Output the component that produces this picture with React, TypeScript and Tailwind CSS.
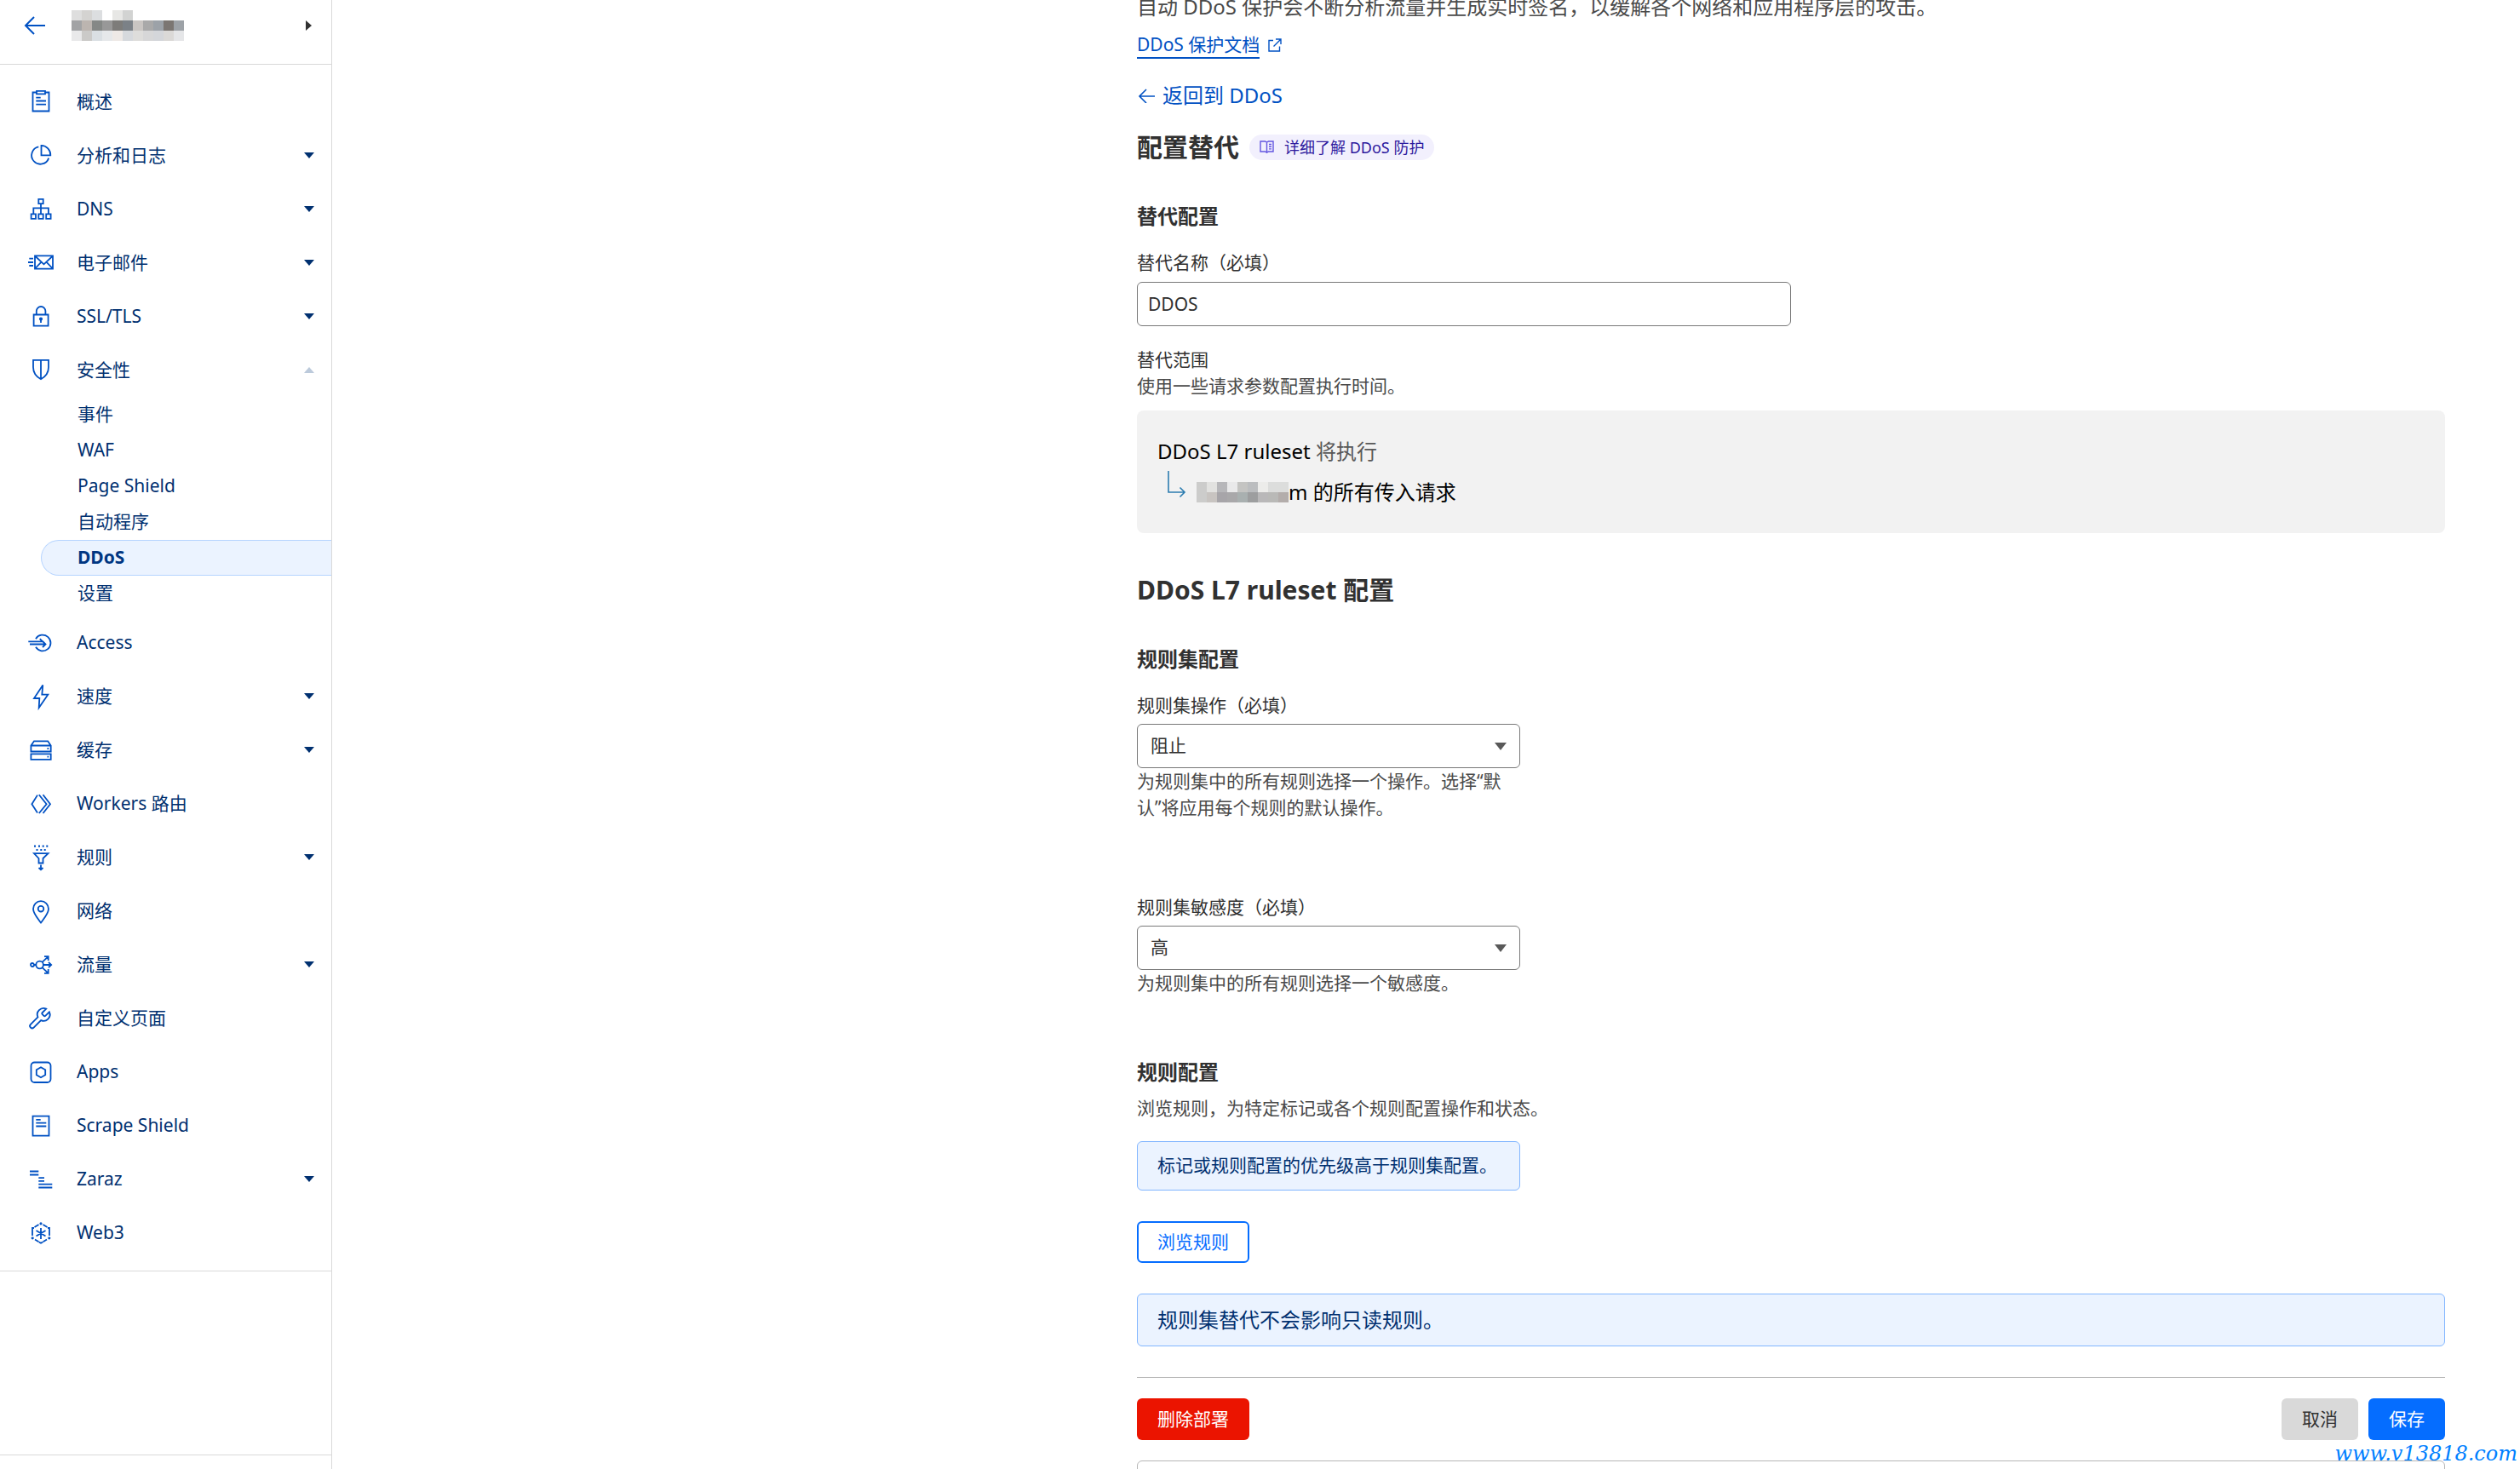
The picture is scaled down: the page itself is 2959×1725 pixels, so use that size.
import type { ReactNode } from "react";

interface NavItem {
  label: string;
  icon: ReactNode;
  expandable?: boolean;
  children?: string[];
}

const Icon = ({ children }: { children: ReactNode }) => (
  <svg
    width="31"
    height="31"
    viewBox="0 0 31 31"
    fill="none"
    stroke="#0051c3"
    strokeWidth="1.8"
    className="shrink-0 overflow-visible"
    aria-hidden="true"
  >
    {children}
  </svg>
);

const navItems: NavItem[] = [
  {
    label: "概述",
    icon: (
      <Icon>
        <path d="M10 4.5H5.5v22h19v-22H20M10 2.8h10v3.6H10zM9.3 10.7h5.4M9.3 14.5H21M9.3 18.6H21" />
      </Icon>
    ),
  },
  {
    label: "分析和日志",
    expandable: true,
    icon: (
      <Icon>
        <path d="M15.5 3.8v11.5h10.8A11 11 0 0 0 15.5 3.8zM12.3 5.3A10.3 10.3 0 1 0 24.2 18.6" />
      </Icon>
    ),
  },
  {
    label: "DNS",
    expandable: true,
    icon: (
      <Icon>
        <path d="M12.3 3.8h5.4v5.4h-5.4zM3.6 21.4H9v5.4H3.6zM12.3 21.4h5.4v5.4h-5.4zM21.2 21.4h5.4v5.4h-5.4zM15 9.2v12.2M6.3 21.4v-7h17.6v7" />
      </Icon>
    ),
  },
  {
    label: "电子邮件",
    expandable: true,
    icon: (
      <Icon>
        <path d="M8 7.3h21v15.4H8zM8 7.5l10.5 9.8L29 7.5M8 22.5l7.3-7.6M29 22.5l-7.3-7.6M1.3 10.7H6M0 15h6M1.3 19H6" />
      </Icon>
    ),
  },
  {
    label: "SSL/TLS",
    expandable: true,
    icon: (
      <Icon>
        <path d="M6.6 13.5h17v13.2h-17zM9.8 13.5V9.3a5.3 5.3 0 0 1 10.6 0v4.2M15 18v5" />
        <circle cx="15" cy="18.6" r="1.2" fill="#0051c3" />
      </Icon>
    ),
  },
  {
    label: "安全性",
    expandable: true,
    icon: (
      <Icon>
        <path d="M6 3.8h18v8.4c0 6.6-3.4 11-9 14-5.6-3-9-7.4-9-14zM15 3.8v22" />
      </Icon>
    ),
    children: ["事件", "WAF", "Page Shield", "自动程序", "DDoS", "设置"],
  },
  {
    label: "Access",
    icon: (
      <Icon>
        <path d="M9 11.2A9.4 9.4 0 1 1 9 20.8M.3 14.4H17l-3.2-3.2M2 17.5h18.5M17 21l3.5-3.5L17 14" />
      </Icon>
    ),
  },
  {
    label: "速度",
    expandable: true,
    icon: (
      <Icon>
        <path d="M17.3 2.5 7 18h6.3l-.6 11L23.3 13.7h-7z" />
      </Icon>
    ),
  },
  {
    label: "缓存",
    expandable: true,
    icon: (
      <Icon>
        <path d="M3.4 10.5 7 5.3h16.2l3.5 5.2v7H3.4zM3.4 10.5h23.3M3.4 20.3h23.3v6.5H3.4zM22.5 14h1.7M22.5 23.6h1.7" />
      </Icon>
    ),
  },
  {
    label: "Workers 路由",
    icon: (
      <Icon>
        <path d="m11 5.6-6.6 10.7L11 26.6M12.8 5.3l8.8 11-8.8 10.7M17.5 5.3l8.5 11-8.5 10.7" />
      </Icon>
    ),
  },
  {
    label: "规则",
    expandable: true,
    icon: (
      <Icon>
        <path d="M7 11.2h16.5L17.5 17v5.5h-5V17zM15 24.5V30M12.5 28l2.5 2.3 2.5-2.3" />
        <path
          d="M7 2.6h2M12 2.6h2M16.7 2.6h2M21.3 2.6h2M9.5 7h2M14.3 7h2M18.7 7h2"
          strokeWidth="2.2"
        />
      </Icon>
    ),
  },
  {
    label: "网络",
    icon: (
      <Icon>
        <path d="M15 29.5C11 24 6 18.5 6 13.2a9 9 0 0 1 18 0c0 5.3-5 10.8-9 16.3z" />
        <circle cx="15" cy="13.2" r="3.3" />
      </Icon>
    ),
  },
  {
    label: "流量",
    expandable: true,
    icon: (
      <Icon>
        <circle cx="5" cy="16" r="2" />
        <circle cx="13.6" cy="16" r="4.3" />
        <path d="M7 16h2.3M17.9 16h9.3M24 12.8l3.2 3.2-3.2 3.2M16.5 12.8l7-6.5M19 6.2h4.7V11M16.5 19.2l7 6.5M19 25.9h4.7V21" />
      </Icon>
    ),
  },
  {
    label: "自定义页面",
    icon: (
      <Icon>
        <path
          transform="translate(-1.5 1.5) scale(1.23)"
          strokeWidth="1.5"
          d="M14.7 6.3a1 1 0 0 0 0 1.4l1.6 1.6a1 1 0 0 0 1.4 0l3.77-3.77a6 6 0 0 1-7.94 7.94l-6.91 6.91a2.12 2.12 0 0 1-3-3l6.91-6.91a6 6 0 0 1 7.94-7.94l-3.76 3.76z"
        />
      </Icon>
    ),
  },
  {
    label: "Apps",
    icon: (
      <Icon>
        <rect x="3.5" y="4.5" width="23" height="23.5" rx="4" />
        <path d="m15 10.2 5.2 3v6l-5.2 3-5.2-3v-6z" />
      </Icon>
    ),
  },
  {
    label: "Scrape Shield",
    icon: (
      <Icon>
        <path d="M5.5 4.7h19v23h-19zM9.3 8.8h5.4M9.3 12.6h12M9.3 16.5h12" />
      </Icon>
    ),
  },
  {
    label: "Zaraz",
    expandable: true,
    icon: (
      <Icon>
        <path d="M2 6.5h10.3M2 10.5h10.3M12.3 14.2H19M12.3 17.8H19M12.3 21.6h16M12.3 25.5h16" />
      </Icon>
    ),
  },
  {
    label: "Web3",
    icon: (
      <Icon>
        <path d="M12.5 6 7.5 9M17.5 6l5 3M5 13v-3h2M25 13v-3h-2M5 13v6M25 13v6M8 23.5l4.5 2.8M22 23.5l-4.5 2.8M15 10v13M9.5 13l11 6.5M20.5 13l-11 6.5M12.8 26.5 15 27.8l2.2-1.3" />
        <circle cx="15" cy="4.8" r=".7" />
        <circle cx="5.2" cy="21.8" r=".7" />
        <circle cx="24.8" cy="21.8" r=".7" />
      </Icon>
    ),
  },
];

// each cell is 12px
const domainMosaic = [
  ["#dedede", "#d4d3d1", "#dcdee0", "#ffffff", "#e7e7e5", "#d2d3d2", "#ffffff", "#ffffff", "#ffffff", "#ffffff", "#ffffff"],
  ["#a2a3a5", "#bcb5b0", "#858886", "#989898", "#7d7c7a", "#7b8187", "#c9c5c2", "#a9a9a9", "#9ca2a8", "#7b7672", "#9da2a7"],
  ["#e9e9ea", "#cbcac8", "#dadfe3", "#e6e8ea", "#eee9e6", "#d6d9dd", "#dedddb", "#d7d7d8", "#d4d6da", "#dbd9d7", "#e5e6e8"],
];

const scopeMosaic = [
  ["#cccccb", "#e2e2e0", "#b7b7ba", "#e9e9ea", "#c4c4c2", "#bbbdbf", "#ececea", "#dcdddc", "#dcdddc"],
  ["#cccccb", "#c8c4c1", "#a7a5a9", "#a9a8aa", "#a9b0b0", "#9d9e9f", "#b9b8b9", "#b9b9b7", "#b3adab"],
];

const Mosaic = ({ rows }: { rows: string[][] }) => (
  <svg
    width={rows[0].length * 12}
    height={rows.length * 12}
    shapeRendering="crispEdges"
    className="shrink-0"
    aria-hidden="true"
  >
    {rows.map((row, y) =>
      row.map((color, x) => (
        <rect key={`${x}-${y}`} x={x * 12} y={y * 12} width="12" height="12" fill={color} />
      ))
    )}
  </svg>
);

const Sidebar = () => (
  <aside className="w-[390px] shrink-0 flex flex-col border-r border-[#d9d9d9] text-[21px] text-[#003070]">
    <div className="h-[76px] shrink-0 pl-7 pr-[23px] pb-[15px] flex items-center border-b border-[#d9d9d9]">
      <a href="#home" aria-label="返回">
        <svg width="26" height="22" viewBox="0 0 26 22" fill="none" stroke="#0051c3" strokeWidth="2">
          <path d="M25 11H2M12 1 2 11l10 10" />
        </svg>
      </a>
      <button type="button" aria-label="切换站点" className="ml-[30px] flex-1 flex items-center justify-between">
        <Mosaic rows={domainMosaic} />
        <svg width="7" height="12" viewBox="0 0 7 12" fill="#313131">
          <path d="M0 0l7 6-7 6z" />
        </svg>
      </button>
    </div>

    <nav className="pt-3 pb-[13px] border-b border-[#d9d9d9]">
      {navItems.map((item) => (
        <div key={item.label}>
          <a href="#nav" className="h-[63px] pl-[33px] pr-5 flex items-center">
            {item.icon}
            <span className="ml-[26px] flex-1">{item.label}</span>
            {item.expandable && (
              <svg
                width="12"
                height="7"
                viewBox="0 0 12 7"
                className={item.children ? "fill-[#bccadb] rotate-180" : "fill-[#003070]"}
                aria-hidden="true"
              >
                <path d="M0 0h12L6 7z" />
              </svg>
            )}
          </a>
          {item.children && (
            <div className="pb-[5px]">
              {item.children.map((child) => (
                <a
                  key={child}
                  href="#sub"
                  className={
                    child === "DDoS"
                      ? "h-[42px] ml-12 pl-[42px] flex items-center rounded-l-full border border-r-0 border-[#b6d4ff] bg-[#ebf3ff] font-bold text-[#003682]"
                      : "h-[42px] ml-12 pl-[43px] flex items-center"
                  }
                >
                  {child}
                </a>
              ))}
            </div>
          )}
        </div>
      ))}
    </nav>

    <div className="mt-auto h-[17px] shrink-0 border-t border-[#d9d9d9]" />
  </aside>
);

interface SelectFieldProps {
  id: string;
  label: string;
  options: string[];
  help: string;
}

const SelectField = ({ id, label, options, help }: SelectFieldProps) => (
  <div className="w-[450px] text-[21px]">
    <label htmlFor={id} className="block leading-8">
      {label}
    </label>
    <div className="relative mt-1.5">
      <select
        id={id}
        className="w-full h-[52px] pl-[15px] pr-10 appearance-none rounded-md border border-[#797979] bg-white"
      >
        {options.map((option) => (
          <option key={option}>{option}</option>
        ))}
      </select>
      <svg
        width="14"
        height="9"
        viewBox="0 0 14 9"
        fill="#595959"
        className="absolute right-4 top-[22px] pointer-events-none"
        aria-hidden="true"
      >
        <path d="M0 0h14L7 9z" />
      </svg>
    </div>
    <p className="leading-[31px] text-[#4a4a4a]">{help}</p>
  </div>
);

const Main = () => (
  <main className="flex-1 min-w-0 pr-[88px] flex justify-end items-start">
    <div className="w-full max-w-[1536px] flex flex-col items-start text-[#313131]">
      <p className="-mt-2.5 text-2xl leading-9 text-[#4a4a4a]">
        自动 DDoS 保护会不断分析流量并生成实时签名，以缓解各个网络和应用程序层的攻击。
      </p>
      <a href="#docs" className="mt-[11px] flex items-center gap-2.5 text-[21px] leading-[30px] text-[#0051c3]">
        <span className="border-b-2 border-[#0051c3]">DDoS 保护文档</span>
        <svg width="16" height="16" viewBox="0 0 16 16" fill="none" stroke="#0051c3" strokeWidth="1.4">
          <path d="M6 2.5H1V15h12.5V9.5M9 1h6v6M15 1 6.5 9.5" />
        </svg>
      </a>
      <a href="#back" className="mt-[25px] flex items-center gap-[9px] text-2xl leading-9 text-[#0051c3]">
        <svg width="21" height="18" viewBox="0 0 21 18" fill="none" stroke="#0051c3" strokeWidth="1.6">
          <path d="M21 10H3M11 2l-8 8 8 8" />
        </svg>
        返回到 DDoS
      </a>

      <div className="mt-5 flex items-center gap-3">
        <h1 className="text-3xl leading-[45px] font-bold">配置替代</h1>
        <a
          href="#learn"
          className="h-[30px] px-3 flex items-center gap-3 rounded-full bg-[#f2f0fd] text-lg text-[#2e1a9e]"
        >
          <svg width="17" height="15" viewBox="0 0 17 15" fill="none" stroke="#6355e0" strokeWidth="1.4">
            <path d="M8.5 2v12M1 1h5.5l2 1.2 2-1.2H16v12h-5.5l-2 1.2-2-1.2H1zM11 4.5h3M11 7.2h3M11 9.9h3" />
          </svg>
          详细了解 DDoS 防护
        </a>
      </div>

      <h2 className="mt-11 text-2xl leading-[30px] font-bold">替代配置</h2>
      <label htmlFor="override-name" className="mt-[23px] text-[21px] leading-8">
        替代名称（必填）
      </label>
      <input
        id="override-name"
        type="text"
        defaultValue="DDOS"
        className="mt-[7px] w-1/2 h-[52px] px-3 rounded-md border border-[#797979] text-[21px]"
      />

      <p className="mt-6 text-[21px] leading-[31px]">替代范围</p>
      <p className="text-[21px] leading-[31px] text-[#4a4a4a]">使用一些请求参数配置执行时间。</p>
      <div className="mt-[13px] w-full px-6 py-[30px] flex flex-col gap-3 rounded-lg bg-[#f2f2f2] text-2xl leading-9 text-black">
        <p>
          DDoS L7 ruleset <span className="text-[#595959]">将执行</span>
        </p>
        <div className="pl-3 flex items-center">
          <svg
            width="22"
            height="36"
            viewBox="0 0 22 36"
            fill="none"
            stroke="#2c7cb0"
            strokeWidth="1.6"
            className="overflow-visible"
            aria-hidden="true"
          >
            <path d="M1-7v25h18M14.5 12.5 20 18l-5.5 5.5" />
          </svg>
          <span className="ml-3 flex items-center">
            <Mosaic rows={scopeMosaic} />
            m 的所有传入请求
          </span>
        </div>
      </div>

      <h2 className="mt-11 text-3xl leading-[45px] font-bold">DDoS L7 ruleset 配置</h2>
      <h3 className="mt-11 mb-[23px] text-2xl leading-[30px] font-bold">规则集配置</h3>
      <SelectField
        id="ruleset-action"
        label="规则集操作（必填）"
        options={["阻止", "默认", "质询", "记录"]}
        help="为规则集中的所有规则选择一个操作。选择“默认”将应用每个规则的默认操作。"
      />
      <div className="h-[85px]" />
      <SelectField
        id="ruleset-sensitivity"
        label="规则集敏感度（必填）"
        options={["高", "中", "低"]}
        help="为规则集中的所有规则选择一个敏感度。"
      />

      <h3 className="mt-[74px] text-2xl leading-[30px] font-bold">规则配置</h3>
      <p className="mt-3 text-[21px] leading-[31px] text-[#4a4a4a]">
        浏览规则，为特定标记或各个规则配置操作和状态。
      </p>
      <div className="mt-[23px] h-[58px] px-[23px] w-[450px] flex items-center rounded-md border border-[#82b6ff] bg-[#ebf3ff] text-[21px] text-[#003070]">
        标记或规则配置的优先级高于规则集配置。
      </div>
      <button
        type="button"
        className="mt-9 h-[49px] w-[132px] rounded-md border-2 border-[#056dff] text-[21px] text-[#056dff]"
      >
        浏览规则
      </button>
      <div className="mt-9 w-full h-[62px] px-[23px] flex items-center rounded-md border border-[#82b6ff] bg-[#ebf3ff] text-2xl text-[#003070]">
        规则集替代不会影响只读规则。
      </div>

      <hr className="mt-9 w-full border-[#b6b6b6]" />
      <div className="mt-6 w-full flex gap-3 text-[21px]">
        <button type="button" className="h-[49px] w-[132px] mr-auto rounded-md bg-[#eb1400] text-white">
          删除部署
        </button>
        <button type="button" className="h-[49px] w-[90px] rounded-md bg-[#d9d9d9]">
          取消
        </button>
        <button type="button" className="h-[49px] w-[90px] rounded-md bg-[#056dff] text-white">
          保存
        </button>
      </div>
      <div className="mt-6 w-full h-24 rounded-md border border-[#b6b6b6]" />
    </div>
  </main>
);

const App = () => {
  return (
    <div
      lang="zh-CN"
      className="relative h-screen overflow-hidden flex bg-white font-['Noto_Sans','Noto_Sans_CJK_SC',sans-serif]"
    >
      <Sidebar />
      <Main />
      <span className="absolute right-[3px] bottom-0.5 font-['DejaVu_Serif',serif] italic text-2xl text-[#0080ff]">
        www.v13818.com
      </span>
    </div>
  );
};

export default App;
